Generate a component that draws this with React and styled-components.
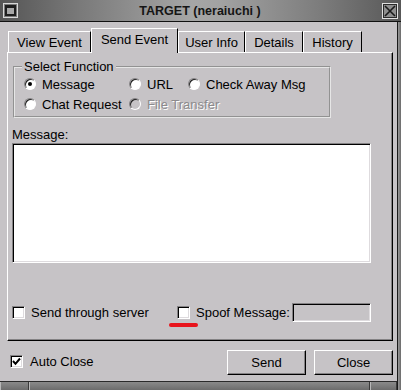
import styled, { createGlobalStyle } from "styled-components";

const GlobalStyle = createGlobalStyle`
  body {
    margin: 0;
    background: #c6c3c6;
    font-family: "Liberation Sans", Arial, sans-serif;
    font-size: 13px;
    color: #000;
  }
`;

const tabs = [
  { label: "View Event", width: 83 },
  { label: "Send Event", width: 87, active: true },
  { label: "User Info", width: 67 },
  { label: "Details", width: 58 },
  { label: "History", width: 59 },
];

const Window = styled.div`
  width: 401px;
  height: 390px;
  display: flex;
  flex-direction: column;
  background: #c6c3c6;
  overflow: hidden;
`;

const TitleBar = styled.div`
  height: 21px;
  border-bottom: 1px solid #111;
  display: flex;
  align-items: center;
  padding: 0 3px;
  background: linear-gradient(
    to right,
    #555 0%,
    #7a7a7a 20%,
    #a6a6a6 48%,
    #a2a2a2 55%,
    #7c7c7c 80%,
    #585858 100%
  );
`;

const Title = styled.div`
  flex: 1;
  text-align: center;
  font-weight: bold;
  font-size: 12.5px;
  color: #151515;
`;

const Body = styled.div`
  flex: 1;
  display: flex;
`;

const Main = styled.div`
  flex: 1;
  display: flex;
  flex-direction: column;
  padding-top: 6px;
`;

const RightFrame = styled.div`
  width: 3px;
  border-left: 1px solid #1a1a1a;
  background: linear-gradient(to right, #9a9a9a, #6a6a6a);
`;

const TabRow = styled.div`
  display: flex;
  align-items: flex-end;
  height: 24px;
  padding-left: 8px;
`;

const Tab = styled.div`
  position: relative;
  z-index: 1;
  box-sizing: border-box;
  width: ${(p) => p.$w}px;
  height: ${(p) => (p.$active ? 25 : 21)}px;
  margin-bottom: ${(p) => (p.$active ? -1 : 0)}px;
  padding-top: 3px;
  line-height: 15px;
  text-align: center;
  background: #c6c3c6;
  border-top: 1px solid #fff;
  border-left: 1px solid #fff;
  border-right: 1px solid #000;
  white-space: nowrap;
`;

const Panel = styled.div`
  box-sizing: border-box;
  height: 289px;
  margin: 0 4px 0 7px;
  border-top: 1px solid #fff;
  border-left: 1px solid #fff;
  border-right: 1px solid #000;
  border-bottom: 1px solid #000;
  box-shadow: inset -1px -1px 0 #848284;
  display: flex;
  flex-direction: column;
`;

const GroupBox = styled.fieldset`
  box-sizing: border-box;
  width: 318px;
  min-inline-size: 0;
  margin: 6px 0 0 5px;
  padding: 2px 9px 4px;
  border: 2px groove #e6e6e6;
`;

const Legend = styled.legend`
  padding: 0 2px;
  margin-left: -2px;
  line-height: 15px;
`;

const RadioGrid = styled.div`
  display: grid;
  grid-template-columns: 105px 59px auto;
  row-gap: 4px;
`;

const Option = styled.label`
  display: flex;
  align-items: center;
  gap: 6px;
  height: 16px;
  white-space: nowrap;
  color: ${(p) => (p.$disabled ? "#8c8a8c" : "#000")};
  text-shadow: ${(p) => (p.$disabled ? "1px 1px 0 #fff" : "none")};
`;

const Radio = styled.span`
  flex-shrink: 0;
  box-sizing: border-box;
  width: 12px;
  height: 12px;
  border-radius: 50%;
  border: 1px solid;
  border-color: #848284 #fff #fff #848284;
  box-shadow: inset 1px 1px 0 #222;
  background: ${(p) => (p.$disabled ? "#c6c3c6" : "#fff")};
  display: grid;
  place-items: center;

  &::after {
    content: "";
    width: 4px;
    height: 4px;
    border-radius: 50%;
    background: ${(p) => (p.$checked ? "#000" : "transparent")};
  }
`;

const FieldLabel = styled.div`
  margin: 9px 0 0 4px;
  line-height: 15px;
`;

const MessageBox = styled.textarea`
  box-sizing: border-box;
  width: 359px;
  height: 120px;
  margin: 1px 0 0 4px;
  padding: 2px;
  resize: none;
  background: #fff;
  border: 1px solid;
  border-color: #848284 #fff #fff #848284;
  box-shadow: inset 1px 1px 0 #000, inset -1px -1px 0 #dedbde;
  font: inherit;
  outline: none;
`;

const CheckRow = styled.div`
  display: flex;
  align-items: center;
  height: 19px;
  margin-top: 40px;
  padding: 0 21px 0 4px;
`;

const CheckItem = styled.label`
  display: flex;
  align-items: center;
  gap: ${(p) => p.$gap || 6}px;
  width: ${(p) => (p.$w ? `${p.$w}px` : "auto")};
  flex-shrink: 0;
  white-space: nowrap;
`;

const BoxWrap = styled.span`
  position: relative;
  display: flex;
`;

const CheckBox = styled.span`
  flex-shrink: 0;
  box-sizing: border-box;
  width: 13px;
  height: 13px;
  background: #fff;
  border: 1px solid;
  border-color: #848284 #fff #fff #848284;
  box-shadow: inset 1px 1px 0 #000, inset -1px -1px 0 #dedbde;
  display: grid;
  place-items: center;
`;

const RedMark = styled.span`
  position: absolute;
  left: -8px;
  top: 17px;
  width: 29px;
  height: 4px;
  border-radius: 2px;
  background: #e8141c;
`;

const SmallInput = styled.input`
  box-sizing: border-box;
  width: 79px;
  height: 19px;
  margin-left: auto;
  background: #c6c3c6;
  border: 1px solid;
  border-color: #848284 #fff #fff #848284;
  box-shadow: inset 1px 1px 0 #000, inset -1px -1px 0 #dedbde;
  outline: none;
`;

const Footer = styled.div`
  height: 40px;
  display: flex;
  align-items: center;
  padding: 0 4px 0 10px;
`;

const Buttons = styled.div`
  margin-left: auto;
  display: flex;
  gap: 8px;
  margin-top: 2px;
`;

const Button = styled.button`
  box-sizing: border-box;
  width: 79px;
  height: 25px;
  background: #c6c3c6;
  border: 1px solid;
  border-color: #fff #000 #000 #fff;
  box-shadow: inset -1px -1px 0 #848284;
  font: inherit;
  color: #000;
  padding: 0;
`;

const BottomFrame = styled.div`
  height: 9px;
  display: flex;
  border-top: 1px solid #2a2a2a;
  box-sizing: border-box;
`;

const FrameSeg = styled.div`
  flex: ${(p) => (p.$w ? `0 0 ${p.$w}px` : 1)};
  border-left: 1px solid #b8b8b8;
  border-right: 1px solid #3a3a3a;
  background: linear-gradient(#8a8a8a, #6c6c6c);
`;

const Check = () => (
  <svg width="9" height="9" viewBox="0 0 9 9">
    <path d="M1 4 L3.5 6.8 L8 1.5" fill="none" stroke="#000" strokeWidth="2" />
  </svg>
);

const WinIcon = () => (
  <svg width="15" height="15" viewBox="0 0 15 15">
    <rect x="0.5" y="0.5" width="14" height="14" fill="#7a7a7a" stroke="#d8d8d8" />
    <rect x="2" y="2" width="11" height="11" fill="#1e1e1e" />
    <rect x="4" y="5" width="7" height="6" fill="#a8a8a8" />
  </svg>
);

const CloseIcon = () => (
  <svg width="16" height="16" viewBox="0 0 16 16">
    <rect x="0.5" y="0.5" width="15" height="15" fill="#8e8e8e" stroke="#e0e0e0" />
    <rect x="1.5" y="1.5" width="13" height="13" fill="none" stroke="#2a2a2a" />
    <path d="M3 3 L13 13 M13 3 L3 13" stroke="#1a1a1a" strokeWidth="1.6" />
  </svg>
);

export default function App() {
  return (
    <>
      <GlobalStyle />
      <Window>
        <TitleBar>
          <WinIcon />
          <Title>TARGET (neraiuchi )</Title>
          <CloseIcon />
        </TitleBar>
        <Body>
          <Main>
            <TabRow>
              {tabs.map((t) => (
                <Tab key={t.label} $w={t.width} $active={t.active}>
                  {t.label}
                </Tab>
              ))}
            </TabRow>
            <Panel>
              <GroupBox>
                <Legend>Select Function</Legend>
                <RadioGrid>
                  <Option>
                    <Radio $checked />
                    Message
                  </Option>
                  <Option>
                    <Radio />
                    URL
                  </Option>
                  <Option>
                    <Radio />
                    Check Away Msg
                  </Option>
                  <Option>
                    <Radio />
                    Chat Request
                  </Option>
                  <Option $disabled>
                    <Radio $disabled />
                    File Transfer
                  </Option>
                </RadioGrid>
              </GroupBox>
              <FieldLabel>Message:</FieldLabel>
              <MessageBox />
              <CheckRow>
                <CheckItem $w={165}>
                  <CheckBox />
                  Send through server
                </CheckItem>
                <CheckItem>
                  <BoxWrap>
                    <CheckBox />
                    <RedMark />
                  </BoxWrap>
                  Spoof Message:
                </CheckItem>
                <SmallInput />
              </CheckRow>
            </Panel>
            <Footer>
              <CheckItem $gap={7}>
                <CheckBox>
                  <Check />
                </CheckBox>
                Auto Close
              </CheckItem>
              <Buttons>
                <Button>Send</Button>
                <Button>Close</Button>
              </Buttons>
            </Footer>
            <BottomFrame>
              <FrameSeg $w={27} />
              <FrameSeg />
              <FrameSeg $w={25} />
            </BottomFrame>
          </Main>
          <RightFrame />
        </Body>
      </Window>
    </>
  );
}
